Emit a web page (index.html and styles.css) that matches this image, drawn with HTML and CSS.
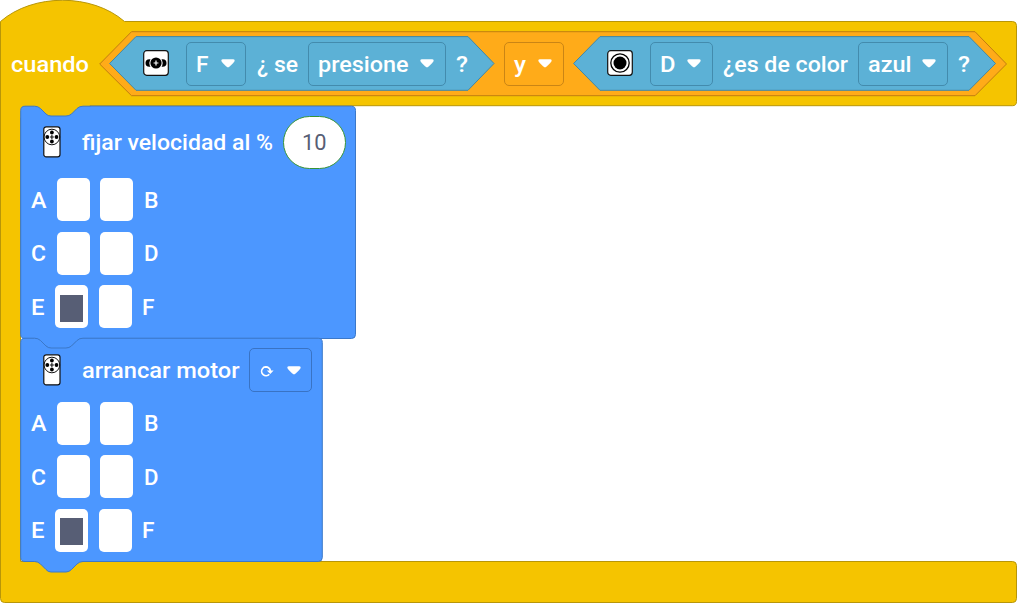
FILE: index.html
```html
<!DOCTYPE html>
<html lang="es">
<head>
<meta charset="utf-8">
<title>Bloques</title>
<link rel="stylesheet" href="styles.css">
</head>
<body>
<svg class="defs" width="0" height="0" aria-hidden="true">
  <symbol id="arrow" viewBox="0 0 14 9"><path d="M2 .3H12Q14 .4 13.6 2Q13.3 3 8.7 7.6Q7 9.2 5.3 7.6Q.7 3 .4 2Q0 .4 2 .3Z" fill="#fff"/></symbol>
  <symbol id="motor" viewBox="0 0 18 32">
    <rect x=".8" y=".8" width="16.2" height="30" rx="2.4" fill="#fff" stroke="#111" stroke-width="1.2"/>
    <circle cx="8.9" cy="11" r="7.8" fill="#fff" stroke="#111" stroke-width="1"/>
    <path d="M8.9 9V13M6.900 11H10.900" stroke="#111" stroke-width="1.1"/>
    <g fill="#000"><circle cx="8.9" cy="6.5" r="1.900"/><circle cx="8.9" cy="15.5" r="1.900"/><circle cx="4.300" cy="11" r="1.900"/><circle cx="13.500" cy="11" r="1.900"/></g>
  </symbol>
</svg>
<main class="hat-block">
  <svg class="shape" width="1017" height="603">
    <path d="M.5 21.5C33-6.8 92-6.8 124.500 21.500H1012.500Q1016.500 21.500 1016.500 25.500V101.500Q1016.500 105.700 1012.500 105.700H90V118H20.500V561.500H1012.500Q1016.500 561.500 1016.500 565.500V598.500Q1016.500 602.500 1012.500 602.500H4.500Q.5 602.500 .5 598.500Z" fill="#f5c400" stroke="#b89608"/>
  </svg>
  <div class="contents">
    <header class="head">
      <svg class="label" width="77.500" height="30"><text y="22.600" textLength="78" lengthAdjust="spacingAndGlyphs">cuando</text></svg>
      <div class="operator">
        <svg class="shape" width="908" height="66"><path d="M.7 33L32.500 .7H876L907.500 33L876 64.700H32.500Z" fill="#ffab19" stroke="#c17e10"/></svg>
        <div class="operator-row">
          <div class="sensor pressed">
            <svg class="shape" width="386" height="55"><path d="M.6 27.500L27 .6H359L385 27.500L359 54.300H27Z" fill="#5cb1d6" stroke="#4388a5"/></svg>
            <div class="sensor-row">
              <svg class="sensor-icon" width="26" height="26"><rect x=".7" y=".7" width="24.6" height="24.600" rx="3" fill="#fff" stroke="#111" stroke-width="1.200"/><rect x="2.500" y="9.200" width="8" height="7.600" rx="3.800"/><rect x="15.500" y="9.200" width="8" height="7.600" rx="3.800"/><circle cx="13" cy="13" r="6.700" fill="#fff"/><circle cx="13" cy="13" r="5.600"/><path d="M13 10.600V15.400M10.600 13H15.400" stroke="#fff" stroke-width="1.200"/></svg>
              <div class="drop port-f"><svg class="label" width="11" height="30"><text y="22.600" textLength="12.500" lengthAdjust="spacingAndGlyphs">F</text></svg><svg class="arrow"><use href="#arrow"/></svg></div>
              <svg class="label" width="40.500" height="30"><text y="22.600" textLength="41" lengthAdjust="spacingAndGlyphs">¿ se</text></svg>
              <div class="drop action"><svg class="label" width="90" height="30"><text y="22.600" textLength="90.500" lengthAdjust="spacingAndGlyphs">presione</text></svg><svg class="arrow"><use href="#arrow"/></svg></div>
              <svg class="label" width="12" height="30"><text y="22.600" textLength="12" lengthAdjust="spacingAndGlyphs">?</text></svg>
            </div>
          </div>
          <div class="drop junction"><svg class="label" width="12" height="30"><text y="22.600" textLength="12" lengthAdjust="spacingAndGlyphs">y</text></svg><svg class="arrow"><use href="#arrow"/></svg></div>
          <div class="sensor color">
            <svg class="shape" width="423" height="55"><path d="M.6 27.500L27 .6H396L422.500 27.500L396 54.300H27Z" fill="#5cb1d6" stroke="#4388a5"/></svg>
            <div class="sensor-row">
              <svg class="sensor-icon" width="26" height="26"><rect x=".7" y=".7" width="24.600" height="24.600" rx="3" fill="#fff" stroke="#111" stroke-width="1.200"/><circle cx="13" cy="13" r="9.200" fill="#fff" stroke="#000" stroke-width="1.300"/><circle cx="13" cy="13" r="6.500"/></svg>
              <div class="drop port-d"><svg class="label" width="13.500" height="30"><text y="22.600" textLength="15.500" lengthAdjust="spacingAndGlyphs">D</text></svg><svg class="arrow"><use href="#arrow"/></svg></div>
              <svg class="label" width="124" height="30"><text y="22.600" textLength="125" lengthAdjust="spacingAndGlyphs">¿es de color</text></svg>
              <div class="drop hue"><svg class="label" width="42" height="30"><text y="22.600" textLength="43.500" lengthAdjust="spacingAndGlyphs">azul</text></svg><svg class="arrow"><use href="#arrow"/></svg></div>
              <svg class="label" width="12" height="30"><text y="22.600" textLength="12" lengthAdjust="spacingAndGlyphs">?</text></svg>
            </div>
          </div>
        </div>
      </div>
    </header>
    <div class="stack">
      <section class="command speed">
        <svg class="shape" width="337" height="244"><path d="M.7 4.500Q.7 .2 5 .2H14.500Q18 .2 20.500 2.500L26 8Q28 10 31 10H46Q49 10 51.500 8L57 2.500Q59.500 .2 63 .2H331.500Q335.500 .2 335.500 4.500V228.500Q335.500 232.500 331.500 232.500H63Q59.500 232.500 57 235L51.500 240Q49 242.500 46 242.500H31Q28 242.500 26 240L20.500 235Q18 232.500 14.500 232.500H5Q.7 232.500 .7 228.500Z" fill="#4c97ff" stroke="#3b78c9"/></svg>
        <div class="command-body">
          <div class="command-row">
            <svg class="motor" width="18" height="32"><use href="#motor"/></svg>
            <svg class="label" width="190.500" height="30"><text y="22.500" textLength="191" lengthAdjust="spacingAndGlyphs">fijar velocidad al %</text></svg>
            <div class="number"><svg class="label dark" width="24" height="30"><text y="22.500" textLength="24.500" lengthAdjust="spacingAndGlyphs">10</text></svg></div>
          </div>
          <div class="ports">
            <div class="port-row"><svg class="label" width="15" height="30"><text y="23" textLength="15.500" lengthAdjust="spacingAndGlyphs">A</text></svg><i class="cell"></i><i class="cell"></i><svg class="label" width="15" height="30"><text y="23" textLength="14.500" lengthAdjust="spacingAndGlyphs">B</text></svg></div>
            <div class="port-row"><svg class="label" width="15" height="30"><text y="23" textLength="15" lengthAdjust="spacingAndGlyphs">C</text></svg><i class="cell"></i><i class="cell"></i><svg class="label" width="15" height="30"><text y="23" textLength="14.500" lengthAdjust="spacingAndGlyphs">D</text></svg></div>
            <div class="port-row"><svg class="label" width="13.500" height="30"><text y="23" textLength="13.500" lengthAdjust="spacingAndGlyphs">E</text></svg><i class="cell on"></i><i class="cell"></i><svg class="label" width="12" height="30"><text y="23" textLength="12.500" lengthAdjust="spacingAndGlyphs">F</text></svg></div>
          </div>
        </div>
      </section>
      <section class="command start">
        <svg class="shape" width="304" height="236"><path d="M.7 4.500Q.7 .2 5 .2H14.500Q18 .2 20.500 2.500L26 8Q28 10 31 10H46Q49 10 51.500 8L57 2.500Q59.500 .2 63 .2H298.300Q302.300 .2 302.300 4.500V219.500Q302.300 223.500 298.300 223.500H63Q59.500 223.500 57 226L51.500 231.500Q49 234 46 234H31Q28 234 26 231.500L20.500 226Q18 223.500 14.500 223.500H5Q.7 223.500 .7 219.500Z" fill="#4c97ff" stroke="#3b78c9"/></svg>
        <div class="command-body">
          <div class="command-row">
            <svg class="motor" width="18" height="32"><use href="#motor"/></svg>
            <svg class="label" width="157" height="30"><text y="22.500" textLength="157.500" lengthAdjust="spacingAndGlyphs">arrancar motor</text></svg>
            <div class="drop turn"><svg class="turn-icon" width="14" height="14"><path d="M8.800 2.900A4.400 4.400 0 1 0 9.300 9.300M3.500 2.200H7.500Q10.300 3.200 10.300 6" fill="none" stroke="#fff" stroke-width="1.700"/><path d="M6.800 5.600H13.600L10.300 9Z" fill="#fff"/></svg><svg class="arrow"><use href="#arrow"/></svg></div>
          </div>
          <div class="ports">
            <div class="port-row"><svg class="label" width="15" height="30"><text y="23" textLength="15.500" lengthAdjust="spacingAndGlyphs">A</text></svg><i class="cell"></i><i class="cell"></i><svg class="label" width="15" height="30"><text y="23" textLength="14.500" lengthAdjust="spacingAndGlyphs">B</text></svg></div>
            <div class="port-row"><svg class="label" width="15" height="30"><text y="23" textLength="15" lengthAdjust="spacingAndGlyphs">C</text></svg><i class="cell"></i><i class="cell"></i><svg class="label" width="15" height="30"><text y="23" textLength="14.500" lengthAdjust="spacingAndGlyphs">D</text></svg></div>
            <div class="port-row"><svg class="label" width="13.500" height="30"><text y="23" textLength="13.500" lengthAdjust="spacingAndGlyphs">E</text></svg><i class="cell on"></i><i class="cell"></i><svg class="label" width="12" height="30"><text y="23" textLength="12.500" lengthAdjust="spacingAndGlyphs">F</text></svg></div>
          </div>
        </div>
      </section>
    </div>
  </div>
</main>
</body>
</html>
```
FILE: styles.css
```css
* { box-sizing: border-box; }
body { margin: 0; background: #fff; overflow: hidden; }
svg { display: block; flex: none; overflow: visible; }
.defs { display: none; }

/* A block stacks its outline and its contents in one grid cell. */
.hat-block, .operator, .sensor, .command {
  display: grid;
  grid-template: 100% / 100%;
  flex: none;
}
.hat-block > *, .operator > *, .sensor > *, .command > * { grid-area: 1 / 1; }
.hat-block { width: 1017px; height: 603px; }

.label text {
  font: 500 22px Roboto, "Noto Sans", sans-serif;
  fill: #fff;
}
.label.dark text { fill: #575e75; font-weight: 400; }

.head {
  display: flex;
  align-items: center;
  gap: 11px;
  height: 106px;
  padding: 21px 0 0 10.5px;
}
.operator { width: 908px; height: 66px; }
.operator-row {
  display: flex;
  align-items: center;
  gap: 9.5px;
  padding-left: 10px;
}
.sensor { height: 55px; }
.pressed { width: 385px; }
.color { width: 422px; }
.sensor-row {
  display: flex;
  align-items: center;
  gap: 10.5px;
  padding-left: 33.5px;
}
.sensor-icon { margin-top: -1px; margin-right: 6.5px; }

.drop {
  display: flex;
  flex: none;
  align-items: center;
  justify-content: space-between;
  height: 44px;
  padding: 0 10.5px 0 9.5px;
  border: 1px solid #438bad;
  border-radius: 5px;
}
.arrow { width: 14px; height: 9px; }
.port-f { width: 60.5px; }
.action { width: 138px; }
.junction { width: 60px; border-color: #ca8515; }
.port-d { width: 63px; }
.hue { width: 90px; }
.turn { width: 63px; padding-left: 10px; border-color: #3973c4; }
.turn-icon { margin-top: 4px; }

.stack { padding-left: 20px; }
.speed { width: 337px; height: 232px; }
.start { width: 304px; height: 224px; }
.command-row {
  display: flex;
  align-items: center;
  gap: 10.5px;
  height: 72px;
  padding-left: 22.5px;
}
.start .command-row { height: 64px; }
.motor { margin-right: 10.5px; }
.number {
  display: grid;
  place-items: center;
  width: 63px;
  height: 53px;
  border: 1px solid #389438;
  border-radius: 27px;
  background: #fff;
}
.ports {
  display: grid;
  gap: 10.5px;
  padding-left: 11px;
}
.start .ports { margin-top: -0.5px; }
.port-row { display: flex; align-items: center; gap: 10.5px; height: 43px; }
.cell {
  display: grid;
  place-items: center;
  width: 33px;
  height: 43px;
  border-radius: 5px;
  background: #fff;
}
.on::before {
  content: "";
  width: 23px;
  height: 27px;
  margin-top: 3px;
  background: #575e75;
}
```
